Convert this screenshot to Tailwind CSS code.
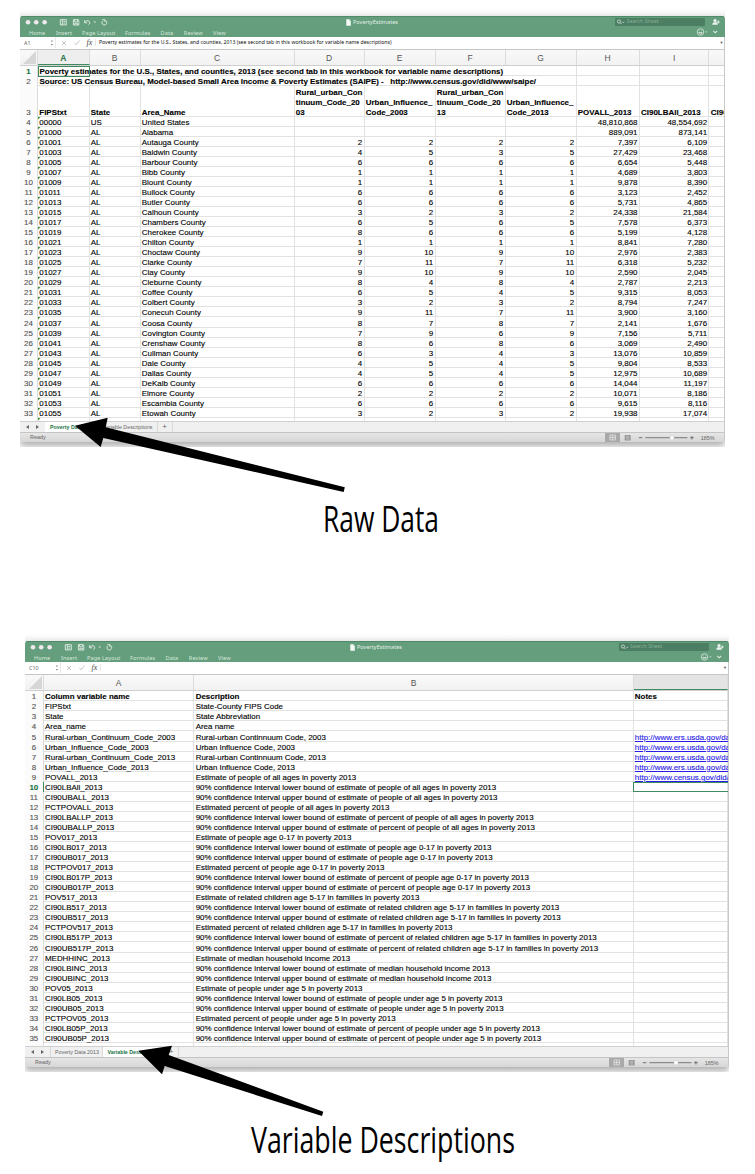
<!DOCTYPE html>
<html lang="en">
<head>
<meta charset="utf-8">
<title>PovertyEstimates</title>
<script src="https://cdn.jsdelivr.net/npm/@tailwindcss/browser@4"></script>
</head>
<body class="bg-white">
<main class="relative w-[755px] h-[1174px] overflow-hidden bg-white font-['Liberation_Sans',sans-serif] text-black">
  <section id="raw" class="pt-[9px] pl-[20px]"></section>
  <div class="h-[178px]"></div>
  <section id="vars" class="pt-[9px] pl-[25px]"></section>
  <svg class="absolute left-0 top-0" width="755" height="1174" viewBox="0 0 755 1174">
    <polygon points="75,425.7 107.7,417.7 105.7,427.3 344.8,487.3 343.7,492 103.3,438 100.7,447"/>
    <polygon points="138.3,1050.7 172,1045.7 168.7,1055 323.3,1111.7 322,1116 164.7,1066 162,1074.3"/>
    <g font-family="Open Sans, sans-serif" font-size="36">
      <text x="323" y="532" textLength="116" lengthAdjust="spacingAndGlyphs">Raw Data</text>
      <text x="251" y="1153" textLength="264" lengthAdjust="spacingAndGlyphs">Variable Descriptions</text>
    </g>
  </svg>
</main>
<script>
const tabs = [['Home',27],['Insert',26],['Page Layout',43],['Formulas',35.5],['Data',23.3],['Review',29.3],['View',20]];

function frame(o) {
  const ribbon = tabs.map(t => `<span class="shrink-0" style="width:${t[1]}px">${t[0]}</span>`).join('');
  const heads = o.cols.map((c, i) => `<div class="shrink-0 border-r border-r-[#dcdcdc] flex items-center justify-center pt-[2px] text-[8.5px] ${i === o.active ? o.activeClass : 'text-[#555]'}" style="width:${c[1]}px">${c[0]}</div>`).join('');
  return `
  <div class="relative h-[438px] overflow-hidden" style="width:${o.w}px">
    <div class="h-[7px] bg-linear-to-b from-white to-[#f0f0f0]"></div>
    <div class="relative h-[426px] rounded-t-[3px] rounded-b-[2px] overflow-hidden bg-white shadow-[0_4px_7px_0_rgba(0,0,0,0.32)] flex flex-col">
      <div class="h-[21.3px] shrink-0 bg-[#659e7d] text-[#d5e8dc] border-t border-[#4f8a69]">
        <div class="flex h-[10px] items-center relative">
          <svg class="shrink-0" width="90" height="10" viewBox="0 0 90 10" fill="none" stroke="#e3efe7" stroke-width=".9">
            <g fill="#efe9ee" stroke="none"><circle cx="8" cy="5.200" r="2.3"/><circle cx="16.200" cy="5.200" r="2.3"/><circle cx="24.600" cy="5.200" r="2.3"/></g>
            <path d="M40.300 2.700h6v5.200h-6zM42.300 2.700v5.200M43.400 4.500h1.800M43.400 6.100h1.800"/>
            <path d="M53.400 2.600h4.800l.6.6v4.800h-5.400zM54.600 2.800v2h3v-2M54.800 7.800v-1.500h2.600v1.500"/>
            <path d="M64.600 3.200v2.600h2.600M64.800 5.500c1-2 3-2.300 4.200-1.300c1.400 1.200 .6 2.800-.6 3.600"/>
            <path d="M73.600 4.600h2.400l-1.200 1.500z" fill="#e3efe7" stroke="none"/>
            <path d="M82.900 3.700c-1.400 1.200-1.400 3.600 .6 4.200c2 .5 3.600-1 3.200-2.800c-.2-.9-.8-1.400-1.500-1.700M82.400 2.600h2.500v2.300"/>
          </svg>
          <div class="absolute top-[.5px] h-[10px] flex items-center gap-[2px] text-[5.550px] font-['Noto_Sans',sans-serif] text-[#e2efe7]" style="left:${o.titleX}px">
            <svg width="5" height="7" viewBox="0 0 5 7"><path d="M.3.300h3L4.800 2v4.700H.3z" fill="#f5faf6"/><path d="M3.300.3V2h1.500" fill="#bcd6c5"/></svg><span>PovertyEstimates</span>
          </div>
          <div class="ml-auto mr-[20px] w-[90px] h-[8px] rounded-[1px] bg-[#4c7e63] flex items-center text-[5.300px] font-['Noto_Sans',sans-serif] text-[#86af97]">
            <svg width="11.500" height="8" viewBox="0 0 11.500 8" fill="none" stroke="#c5dacd" stroke-width=".9"><circle cx="4" cy="3.500" r="1.600"/><path d="M5.200 4.700l1.500 1.500M7.200 3.700l1 1 1-1"/></svg>Search Sheet
          </div>
          <svg class="absolute right-[5px] top-[1px]" width="8" height="8" viewBox="0 0 8 8" fill="#edf5f0"><circle cx="3" cy="2.500" r="1.600"/><path d="M.3 6.800c0-2 1-2.600 2.700-2.600s2.700.6 2.700 2.600zM4.800 3.500h1V2.400h.9v1.100h1v.9h-1v1.100h-.9V4.400h-1z"/></svg>
        </div>
        <div class="flex h-[11px] items-center pt-[1.500px] pl-[9px] text-[5.600px] tracking-[.1px] font-['Noto_Sans',sans-serif] relative">${ribbon}
          <svg class="absolute right-[6px] top-0" width="24" height="10" viewBox="0 0 24 10" fill="none" stroke="#d9e9df" stroke-width=".8"><circle cx="5.500" cy="5" r="3.300"/><path d="M3.700 5.500c.6 1.800 3 1.800 3.600 0zM4.300 3.600v.6M6.700 3.600v.6"/><path d="M10.300 4.400h2.200l-1.100 1.400z" fill="#d9e9df" stroke="none"/><path d="M18.300 4l1.900 1.800L22.100 4" stroke-width="1.100"/></svg>
        </div>
      </div>
      <div class="h-[12.400px] shrink-0 bg-white border-b border-[#c6c6c6] flex items-center font-['Noto_Sans',sans-serif]">
        <span class="w-[29px] pl-[4px] text-[5.400px] text-[#666]">${o.cell}</span>
        <svg class="shrink-0" width="345" height="11" viewBox="0 0 345 11" fill="none" stroke="#b5b5b5" stroke-width=".8">
          <path d="M1.800 4.500l1.100-1.500L4 4.500zM1.800 7l1.100 1.500L4 7z" fill="#777" stroke="none"/><path d="M6.500 0v11" stroke="#e3e3e3"/>
          <path d="M13 4l4 4M17 4l-4 4M25.500 6l1.500 1.700 3.500-4.200"/>
          <text x="37.500" y="8" font-family="Liberation Serif, serif" font-style="italic" font-size="8" fill="#444" stroke="none">fx</text><path d="M46.500 2v7" stroke="#ddd"/>
          ${o.formula ? `<text x="50" y="7.300" font-size="5.500" font-family="Noto Sans, sans-serif" fill="#111" stroke="none" textLength="292.500" lengthAdjust="spacingAndGlyphs">${o.formula}</text>` : ''}
        </svg>
        <span class="ml-auto mr-[1.500px] text-[4px] text-[#555]">▼</span>
      </div>
      <div class="h-[16.600px] shrink-0 flex bg-linear-to-b from-[#f9f9f9] to-[#f2f2f2] border-b border-[#cfcfcf]">
        <div class="shrink-0 border-r border-[#dcdcdc] flex items-end justify-end pr-[1px] pb-[1px]" style="width:${o.hw}px"><svg width="13" height="13" viewBox="0 0 13 13"><path d="M13 0v13H0z" fill="#d6d6d6"/></svg></div>
        ${heads}
      </div>
      <div class="relative overflow-hidden shrink-0 text-[7.950px] leading-[10px] [-webkit-text-stroke:.12px]" style="height:${o.gridH}px">${o.rows}${o.sel}</div>
      <div class="h-[10.900px] shrink-0 bg-[#f0f0f0] border-t border-[#d0d0d0] flex items-stretch text-[5.300px] leading-[10px] text-[#666]">
        <svg class="shrink-0" width="25" height="10" viewBox="0 0 25 10" fill="#666"><path d="M9 3v4L6 5zM16 3v4l3-2z"/></svg>
        ${o.tabs}
        <span class="w-[15px] border-r border-[#d8d8d8] text-center text-[8px] leading-[9px]">+</span>
      </div>
      <div class="flex-1 bg-linear-to-b from-[#e6e6e6] to-[#d6d6d6] border-t border-[#c4c4c4] flex items-center text-[5.400px] text-[#666]">
        <span class="pl-[10px]">Ready</span>
        <svg class="ml-auto shrink-0" width="119.700" height="9" viewBox="0 0 119.700 9" fill="none">
          <path d="M0 0h15v9H0z" fill="#a9a9a9"/><path d="M5 2h5.500v5H5zM5 4.500h5.500M7.700 2v5" stroke="#e9e9e9" stroke-width=".7"/>
          <path d="M19.700 2h6v5.500h-6z" fill="#999"/><path d="M21.200 3.300h3M21.200 4.700h3M21.200 6.100h3" stroke="#ddd" stroke-width=".5"/>
          <path d="M33.800 4.700h3.500M85.200 4.700h3.500M86.900 3v3.500" stroke="#666" stroke-width=".9"/><path d="M40.400 4.700h42" stroke="#8c8c8c" stroke-width="1.200"/>
          <circle cx="67" cy="4.700" r="2.200" fill="#fff" stroke="#aaa" stroke-width=".3"/>
          <text x="95.700" y="6.600" font-size="5.400" fill="#666" font-family="Liberation Sans, sans-serif">185%</text>
        </svg>
      </div>
      <div class="absolute right-0 top-[21px] bottom-0 w-px bg-[#c8c8c8]"></div>
    </div>
  </div>`;
}

const P = 10.06;
const num = (n, w, act) => `<div class="shrink-0 border-r border-[#dcdcdc] bg-[#fbfbfb] flex items-end justify-center ${act ? 'font-bold text-[#217346]' : 'text-[#555]'}" style="width:${w}px"><span class="translate-y-[1px]">${n}</span></div>`;

/* Raw data sheet */
const c1 = [['A',51.5],['B',51],['C',154],['D',70],['E',71],['F',70],['G',71],['H',63.3],['I',69.7],['',15.5]];
const raw = `00000|US|United States|||||48,810,868|48,554,692
01000|AL|Alabama|||||889,091|873,141
01001|AL|Autauga County|2|2|2|2|7,397|6,109
01003|AL|Baldwin County|4|5|3|5|27,429|23,468
01005|AL|Barbour County|6|6|6|6|6,654|5,448
01007|AL|Bibb County|1|1|1|1|4,689|3,803
01009|AL|Blount County|1|1|1|1|9,878|8,390
01011|AL|Bullock County|6|6|6|6|3,123|2,452
01013|AL|Butler County|6|6|6|6|5,731|4,865
01015|AL|Calhoun County|3|2|3|2|24,338|21,584
01017|AL|Chambers County|6|5|6|5|7,578|6,373
01019|AL|Cherokee County|8|6|6|6|5,199|4,128
01021|AL|Chilton County|1|1|1|1|8,841|7,280
01023|AL|Choctaw County|9|10|9|10|2,976|2,383
01025|AL|Clarke County|7|11|7|11|6,318|5,232
01027|AL|Clay County|9|10|9|10|2,590|2,045
01029|AL|Cleburne County|8|4|8|4|2,787|2,213
01031|AL|Coffee County|6|5|4|5|9,315|8,053
01033|AL|Colbert County|3|2|3|2|8,794|7,247
01035|AL|Conecuh County|9|11|7|11|3,900|3,160
01037|AL|Coosa County|8|7|8|7|2,141|1,676
01039|AL|Covington County|7|9|6|9|7,156|5,711
01041|AL|Crenshaw County|8|6|8|6|3,069|2,490
01043|AL|Cullman County|6|3|4|3|13,076|10,859
01045|AL|Dale County|4|5|4|5|9,804|8,533
01047|AL|Dallas County|4|5|4|5|12,975|10,689
01049|AL|DeKalb County|6|6|6|6|14,044|11,197
01051|AL|Elmore County|2|2|2|2|10,071|8,186
01053|AL|Escambia County|6|6|6|6|9,615|8,116
01055|AL|Etowah County|3|2|3|2|19,938|17,074
01057|AL|Fayette County|8|6|8|6|3,448|2,783`.split('\n').map(r => (r + '|').split('|'));
const cell = (t, w, cls, extra) => `<div class="shrink-0 border-r border-b border-[#e2e2e2] flex items-end whitespace-nowrap px-[1.300px] ${cls || ''}" style="width:${w}px">${extra || ''}<span class="translate-y-[2px]">${t}</span></div>`;
const long = (n, t, act) => `<div class="flex font-bold" style="height:${P}px"><div class="flex shrink-0 font-normal">${num(n, 18, act)}</div><div class="w-[538.500px] shrink-0 border-r border-b border-[#e2e2e2] flex items-end whitespace-pre pl-[1.500px]"><span class="translate-y-[2px]">${t}</span></div>${c1.slice(7).map(c => cell('', c[1])).join('')}</div>`;
const heads = ['FIPStxt','State','Area_Name','Rural_urban_Con<br>tinuum_Code_20<br>03','Urban_Influence_<br>Code_2003','Rural_urban_Con<br>tinuum_Code_20<br>13','Urban_Influence_<br>Code_2013','POVALL_2013','CI90LBAll_2013','CI90'];
let r1 = long(1, 'Poverty estimates for the U.S., States, and counties, 2013 (see second tab in this workbook for variable name descriptions)', true)
  + long(2, 'Source: US Census Bureau, Model-based Small Area Income &amp; Poverty Estimates (SAIPE) -   http://www.census.gov/did/www/saipe/', false)
  + `<div class="flex" style="height:${3 * P}px">${num(3, 18)}${heads.map((h, i) => cell(h, c1[i][1], 'font-bold')).join('')}</div>`;
raw.forEach((r, i) => {
  r1 += `<div class="flex" style="height:${P}px">${num(i + 4, 18)}${r.map((v, j) => cell(v, c1[j][1], j === 0 ? 'relative' : j > 2 ? 'justify-end' : '', j === 0 ? '<svg class="absolute left-0 top-0" width="3" height="3"><path d="M0 0h2.500L0 2.500z" fill="#3b8a2e"/></svg>' : '')).join('')}</div>`;
});
document.getElementById('raw').innerHTML = frame({
  w: 705, hw: 18, titleX: 326, cell: 'A1', cols: c1, active: 0, activeClass: 'font-bold text-[#217346] bg-[#eeeeee] border-b border-b-[#3f8a60]',
  formula: 'Poverty estimates for the U.S., States, and counties, 2013 (see second tab in this workbook for variable name descriptions)',
  rows: r1, gridH: 354.700,
  sel: '<div class="absolute left-[17.500px] top-0 w-[52.500px] h-[10.500px] border border-[#3f8a60]"></div>',
  tabs: '<span class="w-[56.500px] shrink-0 border-r border-[#d8d8d8] bg-white pl-[5px] font-bold text-[#217346] whitespace-nowrap">Poverty Data 2013</span><span class="w-[56px] shrink-0 border-r border-[#d8d8d8] text-right pr-[4px] whitespace-nowrap">Variable Descriptions</span>'
});

/* Variable descriptions sheet */
const c2 = [['A',150.7],['B',439.2],['',94.9]];
const lo = '90% confidence interval lower bound of estimate of ', up = '90% confidence interval upper bound of estimate of ';
const vars = [['Column variable name','Description','Notes'],['FIPStxt','State-County FIPS Code'],['State','State Abbreviation'],['Area_name','Area name'],
['Rural-urban_Continuum_Code_2003','Rural-urban Continnuum Code, 2003','http://www.ers.usda.gov/data'],
['Urban_Influence_Code_2003','Urban Influence Code, 2003','http://www.ers.usda.gov/data'],
['Rural-urban_Continuum_Code_2013','Rural-urban Continnuum Code, 2013','http://www.ers.usda.gov/data'],
['Urban_Influence_Code_2013','Urban Influence Code, 2013','http://www.ers.usda.gov/data'],
['POVALL_2013','Estimate of people of all ages in poverty 2013','http://www.census.gov/did/'],
['CI90LBAll_2013',lo+'people of all ages in poverty 2013'],['CI90UBALL_2013',up+'people of all ages in poverty 2013'],
['PCTPOVALL_2013','Estimated percent of people of all ages in poverty 2013'],
['CI90LBALLP_2013',lo+'percent of people of all ages in poverty 2013'],['CI90UBALLP_2013',up+'percent of people of all ages in poverty 2013'],
['POV017_2013','Estimate of people age 0-17 in poverty 2013'],
['CI90LB017_2013',lo+'people age 0-17 in poverty 2013'],['CI90UB017_2013',up+'people age 0-17 in poverty 2013'],
['PCTPOV017_2013','Estimated percent of people age 0-17 in poverty 2013'],
['CI90LB017P_2013',lo+'percent of people age 0-17 in poverty 2013'],['CI90UB017P_2013',up+'percent of people age 0-17 in poverty 2013'],
['POV517_2013','Estimate of related children age 5-17 in families in poverty 2013'],
['CI90LB517_2013',lo+'related children age 5-17 in families in poverty 2013'],['CI90UB517_2013',up+'related children age 5-17 in families in poverty 2013'],
['PCTPOV517_2013','Estimated percent of related children age 5-17 in families in poverty 2013'],
['CI90LB517P_2013',lo+'percent of related children age 5-17 in families in poverty 2013'],['CI90UB517P_2013',up+'percent of related children age 5-17 in families in poverty 2013'],
['MEDHHINC_2013','Estimate of median household income 2013'],
['CI90LBINC_2013',lo+'median household income 2013'],['CI90UBINC_2013',up+'median household income 2013'],
['POV05_2013','Estimate of people under age 5 in poverty 2013'],
['CI90LB05_2013',lo+'people under age 5 in poverty 2013'],['CI90UB05_2013',up+'people under age 5 in poverty 2013'],
['PCTPOV05_2013','Estimated percent of people under age 5 in poverty 2013'],
['CI90LB05P_2013',lo+'percent of people under age 5 in poverty 2013'],['CI90UB05P_2013',up+'percent of people under age 5 in poverty 2013'],['','']];
const r2 = vars.map((v, i) => `<div class="flex" style="height:${P}px">${num(i + 1, 18.7, i === 9)}${[0,1,2].map(j => cell(v[j] || '', c2[j][1], (i === 0 ? 'font-bold' : j === 2 ? 'text-[#2a1ae8] underline' : ''))).join('')}</div>`).join('');
document.getElementById('vars').innerHTML = frame({
  w: 703.5, hw: 18.7, titleX: 325, cell: 'C10', cols: c2, active: 2, activeClass: 'bg-[#e4e4e4] border-b border-b-[#3f8a60]',
  formula: '', rows: r2, gridH: 354.700,
  sel: '<div class="absolute left-[608.300px] top-[90.400px] w-[100px] h-[10.800px] border border-[#3f8a60]"></div><div class="absolute left-[18px] top-[90.500px] w-px h-[10px] bg-[#3f8a60]"></div>',
  tabs: '<span class="w-[53px] shrink-0 border-x border-[#d8d8d8] pl-[4px] whitespace-nowrap">Poverty Data 2013</span><span class="w-[61px] shrink-0 border-r border-[#d8d8d8] bg-white pl-[4.500px] font-bold text-[#217346] whitespace-nowrap">Variable Descriptions</span>'
});
</script>
</body>
</html>
